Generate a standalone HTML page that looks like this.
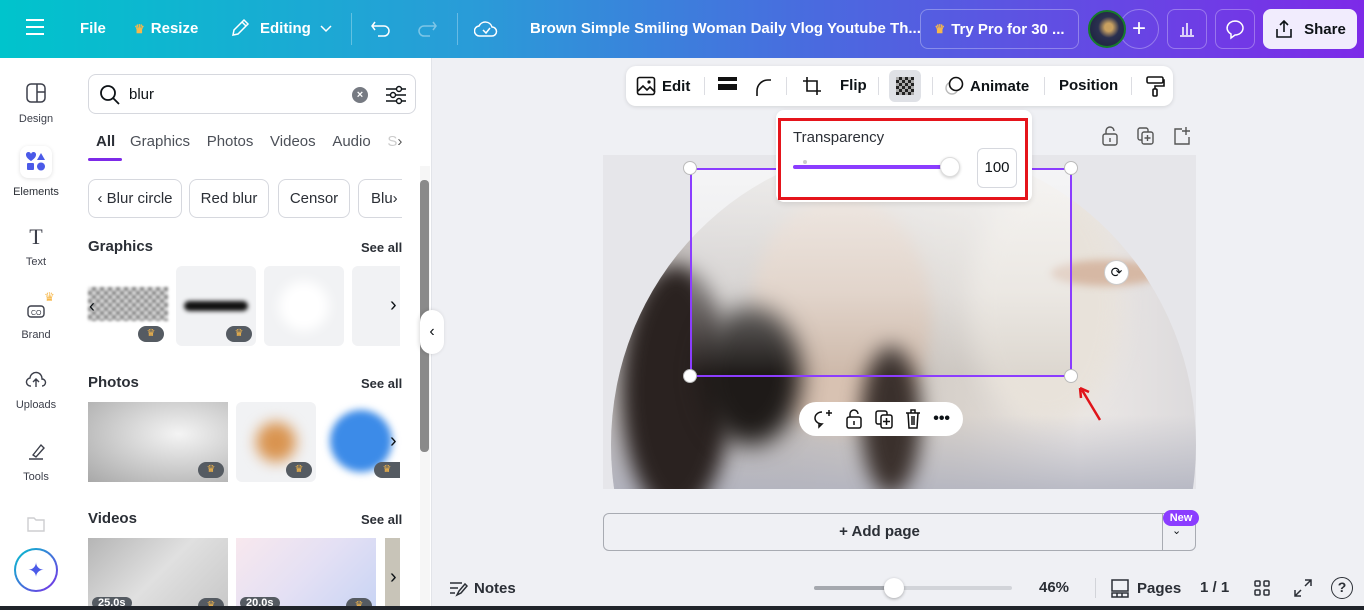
<!DOCTYPE html>
<html><head><meta charset="utf-8"><style>
*{box-sizing:border-box;margin:0;padding:0}
html,body{width:1364px;height:610px;overflow:hidden}
body{font-family:"Liberation Sans",sans-serif;background:#eff0f4;position:relative;color:#0d1216}
.a{position:absolute}
.top{left:0;top:0;width:1364px;height:58px;background:linear-gradient(90deg,#00c4cc 0%,#2a9bd8 35%,#4a6adf 60%,#7d2ae8 100%);color:#fff;font-weight:bold;font-size:15px}
.top .a{display:flex;align-items:center}
.btnb{border:1px solid rgba(255,255,255,.3);border-radius:8px;height:40px;top:9px;justify-content:center}
.side{left:0;top:58px;width:72px;height:548px;background:#fff}
.si{width:72px;text-align:center;font-size:11px;color:#3c3f4a}
.panel{left:72px;top:58px;width:360px;height:548px;background:#fff;border-right:1px solid #e2e4e9;overflow:hidden}
.chip{top:121px;height:39px;border:1px solid #d6d8de;border-radius:8px;font-size:15px;color:#2b2f36;display:flex;align-items:center;justify-content:center}
.h{font-size:15px;font-weight:bold;color:#2b2f36}
.see{font-size:13px;color:#2b2f36;font-weight:bold}
.th{border-radius:6px;background:#f1f2f4;overflow:hidden}
.crown{width:26px;height:16px;border-radius:8px;background:#555b62;color:#f7b84b;font-size:10px;text-align:center;line-height:16px}
.tb{left:626px;top:66px;width:547px;height:40px;background:#fff;border-radius:10px;box-shadow:0 1px 4px rgba(0,0,0,.12);font-size:15px;font-weight:bold}
.tb .a{display:flex;align-items:center}
.sep{width:1px;height:18px;background:#dcdde2;top:11px}
.handle{width:14px;height:14px;border-radius:50%;background:#fff;border:1px solid #bbb}
.blob{position:absolute;border-radius:50%}
</style></head><body>

<div class="a top">
 <div class="a" style="left:26px;top:19px;flex-direction:column;gap:5px;display:flex"><div style="width:18px;height:2px;background:#fff"></div><div style="width:18px;height:2px;background:#fff"></div><div style="width:18px;height:2px;background:#fff"></div></div>
 <div class="a" style="left:80px;top:20px">File</div>
 <div class="a" style="left:134px;top:20px"><span style="color:#f7b84b;font-size:12px;margin-right:6px">♛</span>Resize</div>
 <div class="a" style="left:230px;top:18px"><svg width="20" height="20" viewBox="0 0 20 20"><path d="M3 17l1-5L14 2l4 4L8 16z M12 4l4 4" fill="none" stroke="#fff" stroke-width="1.5"/></svg><span style="margin-left:10px">Editing</span><svg width="14" height="10" style="margin-left:8px"><path d="M2 3l5 5 5-5" fill="none" stroke="#fff" stroke-width="1.5"/></svg></div>
 <div class="a" style="left:351px;top:13px;width:1px;height:32px;background:rgba(255,255,255,.3)"></div>
 <div class="a" style="left:370px;top:19px"><svg width="22" height="20"><path d="M5 3L2 7l3 4M2 7h12a5 5 0 010 10H8" fill="none" stroke="#fff" stroke-width="1.5"/></svg></div>
 <div class="a" style="left:416px;top:19px;opacity:.4"><svg width="22" height="20"><path d="M17 3l3 4-3 4M20 7H8a5 5 0 000 10h6" fill="none" stroke="#fff" stroke-width="1.5"/></svg></div>
 <div class="a" style="left:457px;top:13px;width:1px;height:32px;background:rgba(255,255,255,.3)"></div>
 <div class="a" style="left:474px;top:18px"><svg width="24" height="22"><path d="M6 18a5 5 0 01-1-10 7 7 0 0113 1 4 4 0 010 9z M9 12l3 3 4-5" fill="none" stroke="#fff" stroke-width="1.5"/></svg></div>
 <div class="a" style="left:530px;top:20px;white-space:nowrap">Brown Simple Smiling Woman Daily Vlog Youtube Th...</div>
 <div class="a btnb" style="left:920px;width:159px"><span style="color:#f7b84b;font-size:12px;margin-right:6px">♛</span>Try Pro for 30 ...</div>
 <div class="a" style="left:1119px;top:9px;width:40px;height:40px;border-radius:50%;border:1px solid rgba(255,255,255,.3);justify-content:center;font-size:24px;font-weight:normal">+</div>
 <div class="a" style="left:1088px;top:10px;width:38px;height:38px;border-radius:50%;border:2px solid #167a2a;background:radial-gradient(circle at 55% 45%,#c8a060 0 15%,#2a3050 40%,#1a1f3a)"></div>
 <div class="a btnb" style="left:1167px;width:40px"><svg width="20" height="20"><path d="M3 17h14M6 16V8M10 16V4M14 16V10" stroke="#fff" stroke-width="1.5"/></svg></div>
 <div class="a btnb" style="left:1215px;width:40px"><svg width="22" height="22"><path d="M11 3a8 7 0 110 14l-4 3 0-4A8 7 0 0111 3z" fill="none" stroke="#fff" stroke-width="1.5"/></svg></div>
 <div class="a" style="left:1263px;top:9px;width:94px;height:40px;border-radius:8px;background:#f1ecfd;color:#0d1216;justify-content:center"><svg width="20" height="20" style="margin-right:10px"><path d="M3 10v8h14v-8M10 13V2M6 6l4-4 4 4" fill="none" stroke="#0d1216" stroke-width="1.6"/></svg>Share</div>
</div>

<div class="a side">
 <div class="a si" style="top:24px"><svg width="22" height="22"><rect x="2" y="2" width="18" height="18" rx="4" fill="none" stroke="#3c3f4a" stroke-width="1.5"/><path d="M12 2v18M12 10h8" stroke="#3c3f4a" stroke-width="1.5"/></svg><div style="margin-top:6px">Design</div></div>
 <div class="a" style="left:20px;top:88px;width:32px;height:32px;border-radius:8px;background:#fff;box-shadow:0 1px 4px rgba(0,0,0,.12)"><svg width="32" height="32"><path d="M7 10a2.5 2.5 0 015-1 2.5 2.5 0 015 1c0 3-5 6-5 6s-5-3-5-6z" fill="#4b5ae8" transform="translate(-1,-1)"/><path d="M21 7l4 7h-8z" fill="#4b5ae8"/><rect x="7" y="17" width="7" height="7" rx="1" fill="#4b5ae8"/><circle cx="21" cy="20.5" r="4" fill="#4b5ae8"/></svg></div>
 <div class="a si" style="top:128px;color:#2b2f36">Elements</div>
 <div class="a si" style="top:168px"><div style="font-family:'Liberation Serif',serif;font-size:22px;color:#3c3f4a;line-height:22px">T</div><div style="margin-top:8px">Text</div></div>
 <div class="a si" style="top:240px"><svg width="22" height="22"><rect x="3" y="8" width="16" height="11" rx="3" fill="none" stroke="#3c3f4a" stroke-width="1.4"/><text x="6" y="17" font-size="7" fill="#3c3f4a" font-family="Liberation Sans">CO</text></svg><span class="a" style="left:44px;top:-8px;color:#f7b84b;font-size:12px">♛</span><div style="margin-top:6px">Brand</div></div>
 <div class="a si" style="top:312px"><svg width="22" height="20"><path d="M6 16a4 4 0 01-1-8 6 6 0 0112 1 3.5 3.5 0 010 7M11 17V10M8 12l3-3 3 3" fill="none" stroke="#3c3f4a" stroke-width="1.4"/></svg><div style="margin-top:6px">Uploads</div></div>
 <div class="a si" style="top:384px"><svg width="22" height="20"><path d="M8 13l8-10 3 3-8 9zM4 17h14" fill="none" stroke="#3c3f4a" stroke-width="1.4"/></svg><div style="margin-top:6px">Tools</div></div>
 <div class="a si" style="top:456px;opacity:.25"><svg width="22" height="20"><path d="M3 4h6l2 2h8v11H3z" fill="none" stroke="#3c3f4a" stroke-width="1.4"/></svg></div>
 <div class="a" style="left:14px;top:490px;width:44px;height:44px;border-radius:50%;background:linear-gradient(135deg,#00c4cc,#7d2ae8);padding:2px"><div style="width:40px;height:40px;border-radius:50%;background:#fff;display:flex;align-items:center;justify-content:center;color:#4b5ae8;font-size:20px">✦</div></div>
</div>

<div class="a panel">
 <div class="a" style="left:16px;top:16px;width:328px;height:40px;border:1px solid #d6d8de;border-radius:8px">
  <svg class="a" style="left:10px;top:9px" width="22" height="22"><circle cx="9" cy="9" r="7" fill="none" stroke="#0d1216" stroke-width="1.8"/><path d="M14 14l6 6" stroke="#0d1216" stroke-width="1.8"/></svg>
  <div class="a" style="left:40px;top:11px;font-size:15px">blur</div>
  <div class="a" style="left:263px;top:12px;width:16px;height:16px;border-radius:50%;background:#767a82;color:#fff;font-size:11px;text-align:center;line-height:16px;font-weight:bold">×</div>
  <svg class="a" style="left:296px;top:10px" width="22" height="20"><path d="M1 4h20M1 10h20M1 16h20" stroke="#0d1216" stroke-width="1.6"/><circle cx="14" cy="4" r="2.5" fill="#fff" stroke="#0d1216" stroke-width="1.4"/><circle cx="8" cy="10" r="2.5" fill="#fff" stroke="#0d1216" stroke-width="1.4"/><circle cx="14" cy="16" r="2.5" fill="#fff" stroke="#0d1216" stroke-width="1.4"/></svg>
 </div>
 <div class="a" style="left:24px;top:75px;font-size:15px;color:#2b2f36;font-weight:bold">All</div>
 <div class="a" style="left:16px;top:100px;width:34px;height:3px;background:#7d2ae8;border-radius:2px"></div>
 <div class="a" style="left:58px;top:75px;font-size:15px;color:#4c5058;white-space:nowrap">Graphics&nbsp;&nbsp;&nbsp;&nbsp;Photos&nbsp;&nbsp;&nbsp;&nbsp;Videos&nbsp;&nbsp;&nbsp;&nbsp;Audio&nbsp;&nbsp;&nbsp;&nbsp;<span style="color:#ccc">S</span><span style="color:#555">›</span></div>
 <div class="a chip" style="left:16px;width:94px">‹ Blur circle</div>
 <div class="a chip" style="left:117px;width:80px">Red blur</div>
 <div class="a chip" style="left:206px;width:72px">Censor</div>
 <div class="a chip" style="left:286px;width:44px;justify-content:flex-start;padding-left:12px;border-right:none;border-radius:8px 0 0 8px">Blu›</div>
 <div class="a h" style="left:16px;top:180px">Graphics</div><div class="a see" style="left:289px;top:182px">See all</div>
 <div class="a" style="left:16px;top:229px;width:80px;height:34px;background:repeating-conic-gradient(#888 0 25%,#ddd 0 50%) 0 0/8px 8px;filter:blur(1.2px)"></div>
 <div class="a" style="left:17px;top:238px;font-size:18px">‹</div>
 <div class="a crown" style="left:66px;top:268px">♛</div>
 <div class="a th" style="left:104px;top:208px;width:80px;height:80px"><div style="margin:35px 8px;height:10px;background:#111;border-radius:5px;filter:blur(2px)"></div></div>
 <div class="a crown" style="left:154px;top:268px">♛</div>
 <div class="a th" style="left:192px;top:208px;width:80px;height:80px"><div style="margin:15px;height:50px;background:#fff;border-radius:50%;filter:blur(6px)"></div></div>
 <div class="a th" style="left:280px;top:208px;width:48px;height:80px;border-radius:6px 0 0 6px"></div>
 <div class="a" style="left:318px;top:236px;font-size:20px">›</div>
 <div class="a h" style="left:16px;top:316px">Photos</div><div class="a see" style="left:289px;top:318px">See all</div>
 <div class="a" style="left:16px;top:344px;width:140px;height:80px;background:radial-gradient(ellipse at 65% 40%,#f4f4f4,#a8a8a8)"></div>
 <div class="a crown" style="left:126px;top:404px">♛</div>
 <div class="a th" style="left:164px;top:344px;width:80px;height:80px"><div style="margin:20px;width:40px;height:40px;background:#d99450;border-radius:50%;filter:blur(7px)"></div></div>
 <div class="a crown" style="left:214px;top:404px">♛</div>
 <div class="a" style="left:258px;top:352px;width:62px;height:62px;background:#3c8be8;border-radius:50%;filter:blur(4px)"></div>
 <div class="a crown" style="left:302px;top:404px;border-radius:8px 0 0 8px">♛</div>
 <div class="a" style="left:318px;top:372px;font-size:20px">›</div>
 <div class="a h" style="left:16px;top:452px">Videos</div><div class="a see" style="left:289px;top:454px">See all</div>
 <div class="a" style="left:16px;top:480px;width:140px;height:72px;background:linear-gradient(135deg,#b5b5b5,#e0e0e0,#c8c8c8)"></div>
 <div class="a" style="left:164px;top:480px;width:140px;height:72px;background:linear-gradient(135deg,#f8e8ee,#e4e0f4,#c8d4f4)"></div>
 <div class="a" style="left:313px;top:480px;width:15px;height:72px;background:#c8c4b8"></div>
 <div class="a" style="left:318px;top:508px;font-size:20px">›</div>
 <div class="a" style="left:20px;top:539px;font-size:11px;color:#fff;background:#555b62;border-radius:8px;padding:0 6px;font-weight:bold">25.0s</div>
 <div class="a crown" style="left:126px;top:540px">♛</div>
 <div class="a" style="left:168px;top:539px;font-size:11px;color:#fff;background:#555b62;border-radius:8px;padding:0 6px;font-weight:bold">20.0s</div>
 <div class="a crown" style="left:274px;top:540px">♛</div>
 <div class="a" style="left:348px;top:108px;width:10px;height:440px;background:#f6f6f6"></div>
 <div class="a" style="left:348px;top:122px;width:9px;height:272px;background:#8a8a8a;border-radius:4px"></div>
</div>
<div class="a" style="left:420px;top:310px;width:24px;height:44px;background:#fff;box-shadow:-1px 0 4px rgba(0,0,0,.15);font-size:16px;text-align:center;line-height:44px;border-radius:12px">‹</div>

<div class="a" style="left:0;top:606px;width:1364px;height:4px;background:#20242a"></div>

<!-- canvas -->
<div class="a" style="left:603px;top:155px;width:593px;height:334px;background:#e6e6ea;overflow:hidden">
 <div class="a" style="left:8px;top:-10px;width:585px;height:600px;border-radius:50%;overflow:hidden;background:linear-gradient(90deg,#c4c0c0 0%,#c8c2be 30%,#d8d2cc 60%,#ece8e6 80%,#dcdadc 100%)">
  <div class="blob" style="left:140px;top:50px;width:180px;height:240px;background:#d8c2b2;filter:blur(8px)"></div>
  <div class="blob" style="left:360px;top:40px;width:150px;height:240px;background:#e8e2da;filter:blur(12px)"></div>
  <div class="blob" style="left:440px;top:115px;width:110px;height:26px;background:#d6b8a4;filter:blur(4px)"></div>
  <div class="a" style="left:0;top:270px;width:585px;height:90px;background:linear-gradient(180deg,rgba(190,190,200,0),#b0b2bf)"></div>
  <div class="blob" style="left:10px;top:120px;width:110px;height:250px;background:#2a2220;filter:blur(10px)"></div>
  <div class="blob" style="left:90px;top:160px;width:100px;height:140px;background:#1e1a18;filter:blur(12px)"></div>
  <div class="blob" style="left:250px;top:200px;width:60px;height:150px;background:#3a302c;filter:blur(10px)"></div>
 </div>
 <div class="a" style="left:87px;top:13px;width:382px;height:208px;background:linear-gradient(180deg,rgba(250,250,250,.75),rgba(240,240,240,.4) 60%,rgba(0,0,0,.05))"></div>
</div>
<div class="a" style="left:690px;top:168px;width:382px;height:209px;border:2px solid #8b3dff"></div>
<div class="a handle" style="left:683px;top:161px"></div>
<div class="a handle" style="left:1064px;top:161px"></div>
<div class="a handle" style="left:683px;top:369px"></div>
<div class="a handle" style="left:1064px;top:369px"></div>
<div class="a" style="left:1104px;top:260px;width:25px;height:25px;border-radius:50%;background:#fff;border:1px solid #ccc;font-size:14px;text-align:center;line-height:23px">⟳</div>
<svg class="a" style="left:1076px;top:384px" width="30" height="40"><path d="M24 36L6 6M4 4l9 4M4 4l1 10" stroke="#e0141a" stroke-width="2.5" fill="none"/></svg>
<div class="a" style="left:799px;top:402px;width:164px;height:34px;background:#fff;border-radius:17px;display:flex;align-items:center;justify-content:space-around;padding:0 8px;font-size:16px;font-weight:bold">
 <svg width="22" height="22"><path d="M10 4a7 6 0 100 12l-3 3v-4" fill="none" stroke="#111" stroke-width="1.5"/><path d="M17 2v6M14 5h6" stroke="#111" stroke-width="1.5"/></svg>
 <svg width="20" height="22"><rect x="3" y="9" width="14" height="11" rx="2" fill="none" stroke="#111" stroke-width="1.5"/><path d="M6 9V6a4 4 0 018 0M10 13v4" fill="none" stroke="#111" stroke-width="1.5"/></svg>
 <svg width="20" height="22"><rect x="2" y="3" width="11" height="13" rx="2" fill="none" stroke="#111" stroke-width="1.5"/><rect x="7" y="7" width="11" height="13" rx="2" fill="#fff" stroke="#111" stroke-width="1.5"/><path d="M12.5 10v7M9 13.5h7" stroke="#111" stroke-width="1.5"/></svg>
 <svg width="20" height="22"><path d="M3 5h14M8 5V2h4v3M5 5l1 15h8l1-15M9 8v9M11 8v9" fill="none" stroke="#111" stroke-width="1.5"/></svg>
 <span>•••</span>
</div>

<div class="a tb">
 <div class="a" style="left:10px;top:10px"><svg width="20" height="20"><rect x="1.5" y="1.5" width="17" height="17" rx="2" fill="none" stroke="#111" stroke-width="1.6"/><path d="M2 15l5-5 4 4 3-3 5 5" fill="none" stroke="#111" stroke-width="1.6"/><circle cx="13" cy="6" r="1.6" fill="#111"/></svg><span style="margin-left:6px">Edit</span></div>
 <div class="a sep" style="left:78px"></div>
 <div class="a" style="left:92px;top:11px;flex-direction:column;gap:3px;display:flex"><div style="width:19px;height:4px;background:#111"></div><div style="width:19px;height:6px;background:#111"></div></div>
 <div class="a" style="left:128px;top:11px"><svg width="20" height="20"><path d="M3 19V14A11 11 0 0114 3h3" fill="none" stroke="#111" stroke-width="1.6"/></svg></div>
 <div class="a sep" style="left:160px"></div>
 <div class="a" style="left:176px;top:10px"><svg width="20" height="20"><path d="M5 1v14h14M1 5h14v14" fill="none" stroke="#111" stroke-width="1.6"/></svg></div>
 <div class="a" style="left:214px;top:11px">Flip</div>
 <div class="a sep" style="left:252px"></div>
 <div class="a" style="left:263px;top:4px;width:32px;height:32px;border-radius:6px;background:#dfe1e6;justify-content:center"><div style="width:18px;height:18px;background:repeating-conic-gradient(#222 0 25%,#aaa 0 50%) 0 0/6px 6px"></div></div>
 <div class="a sep" style="left:306px"></div>
 <div class="a" style="left:318px;top:10px"><svg width="22" height="20"><circle cx="8" cy="12" r="6" fill="none" stroke="#bbb" stroke-width="1.4"/><circle cx="12" cy="8" r="6.5" fill="#fff" stroke="#111" stroke-width="1.6"/></svg><span style="margin-left:4px">Animate</span></div>
 <div class="a sep" style="left:418px"></div>
 <div class="a" style="left:433px;top:11px">Position</div>
 <div class="a sep" style="left:505px"></div>
 <div class="a" style="left:519px;top:9px"><svg width="20" height="22"><rect x="2" y="2" width="16" height="6" rx="1.5" fill="none" stroke="#111" stroke-width="1.6"/><path d="M18 5h1v6h-9v3" fill="none" stroke="#111" stroke-width="1.6"/><rect x="8" y="14" width="4" height="7" rx="1" fill="none" stroke="#111" stroke-width="1.6"/></svg></div>
</div>

<div class="a" style="left:776px;top:110px;width:256px;height:92px;background:#fff;border-radius:8px;box-shadow:0 2px 6px rgba(0,0,0,.1)"></div>
<div class="a" style="left:778px;top:118px;width:250px;height:82px;border:3px solid #e5141b"></div>
<div class="a" style="left:793px;top:129px;font-size:15px;color:#2b2f36">Transparency</div>
<div class="a" style="left:793px;top:165px;width:155px;height:4px;background:#8b3dff;border-radius:2px"></div>
<div class="a" style="left:803px;top:160px;width:4px;height:4px;border-radius:50%;background:#ccc"></div>
<div class="a" style="left:940px;top:157px;width:20px;height:20px;border-radius:50%;background:#fff;border:1px solid #ddd;box-shadow:0 1px 3px rgba(0,0,0,.2)"></div>
<div class="a" style="left:977px;top:148px;width:40px;height:40px;border:1px solid #d6d8de;border-radius:6px;font-size:15px;text-align:center;line-height:38px">100</div>

<svg class="a" style="left:1100px;top:126px" width="20" height="20"><rect x="3" y="8" width="14" height="11" rx="2" fill="none" stroke="#555" stroke-width="1.4"/><path d="M6 8V5a4 4 0 018 0M10 12v4" fill="none" stroke="#555" stroke-width="1.4"/></svg>
<svg class="a" style="left:1136px;top:126px" width="20" height="20"><rect x="2" y="2" width="10" height="12" rx="2" fill="none" stroke="#555" stroke-width="1.4"/><rect x="6" y="6" width="11" height="12" rx="2" fill="#eff0f4" stroke="#555" stroke-width="1.4"/><path d="M11.5 9v6M8.5 12h6" stroke="#555" stroke-width="1.4"/></svg>
<svg class="a" style="left:1172px;top:126px" width="20" height="20"><path d="M10 3H3v15h14v-7M14 1v8M10 5h8" fill="none" stroke="#555" stroke-width="1.4"/></svg>

<div class="a" style="left:603px;top:513px;width:593px;height:38px;border:1px solid #a8abb2;border-radius:6px;font-size:15px;font-weight:bold;text-align:center;line-height:36px;padding-right:40px;color:#2b2f36">+ Add page</div>
<div class="a" style="left:1162px;top:514px;width:1px;height:36px;background:#a8abb2"></div>
<div class="a" style="left:1172px;top:524px;font-size:11px">⌄</div>
<div class="a" style="left:1163px;top:510px;width:36px;height:16px;border-radius:8px;background:#8b3dff;color:#fff;font-size:11px;font-weight:bold;text-align:center;line-height:16px">New</div>

<div class="a" style="left:448px;top:579px;display:flex;align-items:center;font-size:15px;font-weight:bold;color:#2b2f36"><svg width="20" height="18"><path d="M2 4h12M2 9h8M2 14h5M9 16l2-4 6-7 2 2-6 7z" fill="none" stroke="#2b2f36" stroke-width="1.5"/></svg><span style="margin-left:6px">Notes</span></div>
<div class="a" style="left:814px;top:586px;width:198px;height:4px;background:#d2d4d9;border-radius:2px"></div>
<div class="a" style="left:814px;top:586px;width:80px;height:4px;background:#a5a8ae;border-radius:2px"></div>
<div class="a" style="left:884px;top:578px;width:20px;height:20px;border-radius:50%;background:#fff;box-shadow:0 1px 3px rgba(0,0,0,.3)"></div>
<div class="a" style="left:1039px;top:579px;font-size:15px;font-weight:bold;color:#2b2f36">46%</div>
<div class="a" style="left:1095px;top:578px;width:1px;height:20px;background:#d2d4d9"></div>
<div class="a" style="left:1110px;top:578px;display:flex;align-items:center;font-size:15px;font-weight:bold;color:#2b2f36"><svg width="20" height="20"><rect x="2" y="2" width="16" height="11" fill="none" stroke="#2b2f36" stroke-width="1.5"/><path d="M2 15h16v4H2z M7 15v4M12 15v4" fill="none" stroke="#2b2f36" stroke-width="1.5"/></svg><span style="margin-left:7px">Pages</span></div>
<div class="a" style="left:1200px;top:579px;font-size:15px;font-weight:bold;color:#2b2f36">1 / 1</div>
<svg class="a" style="left:1253px;top:579px" width="18" height="18"><rect x="2" y="2" width="5" height="5" rx="1" fill="none" stroke="#2b2f36" stroke-width="1.5"/><rect x="11" y="2" width="5" height="5" rx="1" fill="none" stroke="#2b2f36" stroke-width="1.5"/><rect x="2" y="11" width="5" height="5" rx="1" fill="none" stroke="#2b2f36" stroke-width="1.5"/><rect x="11" y="11" width="5" height="5" rx="1" fill="none" stroke="#2b2f36" stroke-width="1.5"/></svg>
<svg class="a" style="left:1293px;top:578px" width="20" height="20"><path d="M12 2h6v6M18 2l-6 6M8 18H2v-6M2 18l6-6" fill="none" stroke="#2b2f36" stroke-width="1.5"/></svg>
<div class="a" style="left:1331px;top:577px;width:22px;height:22px;border:1.5px solid #2b2f36;border-radius:50%;font-size:14px;font-weight:bold;text-align:center;line-height:19px;color:#2b2f36">?</div>
</body></html>
